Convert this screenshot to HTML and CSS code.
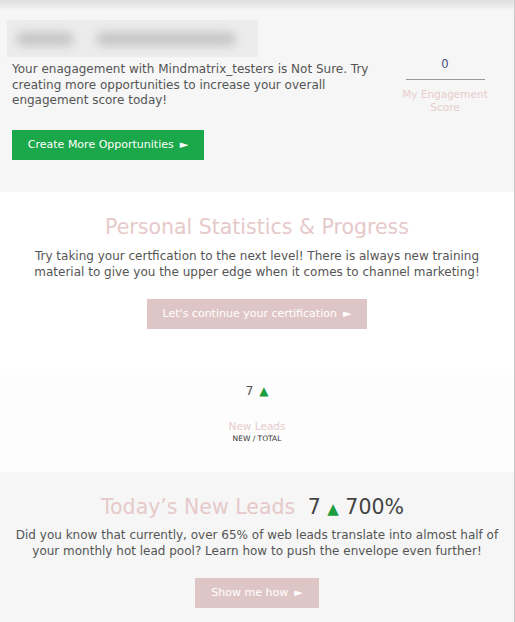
FILE: index.html
```html
<!DOCTYPE html>
<html>
<head>
<meta charset="utf-8">
<link rel="stylesheet" href="styles.css">
</head>
<body>
<div class="page">
  <section class="engage">
    <div class="engage-main">
      <div class="name-blur"><span class="blob b1"></span><span class="blob b2"></span></div>
      <p class="engage-text">Your enagagement with Mindmatrix_testers is Not Sure. Try creating more opportunities to increase your overall engagement score today!</p>
      <a class="btn btn-green">Create More Opportunities <span class="arrow">&#9658;</span></a>
    </div>
    <div class="score">
      <div class="score-num">0</div>
      <div class="score-label">My Engagement Score</div>
    </div>
  </section>
  <section class="stats">
    <h2 class="pink-title">Personal Statistics &amp; Progress</h2>
    <p class="center-text">Try taking your certfication to the next level! There is always new training material to give you the upper edge when it comes to channel marketing!</p>
    <a class="btn btn-pink btn-cert">Let's continue your certification <span class="arrow">&#9658;</span></a>
  </section>
  <section class="leads">
    <div class="leads-num">7 <span class="tri">&#9650;</span></div>
    <div class="leads-label">New Leads</div>
    <div class="leads-sub">NEW / TOTAL</div>
  </section>
  <section class="today">
    <h2 class="today-title"><span class="pink-part">Today’s New Leads</span> <span class="dark-part">7 <span class="tri">&#9650;</span> 700%</span></h2>
    <p class="center-text today-text">Did you know that currently, over 65% of web leads translate into almost half of your monthly hot lead pool? Learn how to push the envelope even further!</p>
    <a class="btn btn-pink btn-show">Show me how <span class="arrow">&#9658;</span></a>
  </section>
</div>
</body>
</html>
```
FILE: styles.css
```css
html, body {
  margin: 0;
  padding: 0;
  background: #ffffff;
}
body {
  font-family: "DejaVu Sans", Verdana, sans-serif;
  color: #555555;
}
.page {
  width: 514px;
  border-right: 1px solid #c9c9c9;
  min-height: 622px;
  background: #f6f6f6;
}
.engage {
  display: flex;
  background: linear-gradient(#dedede, #f6f6f6 11px);
  padding: 20px 0 32px 7px;
}
.engage-main {
  width: 380px;
}
.name-blur {
  width: 251px;
  height: 37px;
  background: #ececec;
  display: flex;
  align-items: center;
  gap: 22px;
  padding-left: 9px;
  box-sizing: border-box;
  overflow: hidden;
}
.blob {
  display: block;
  height: 14px;
  background: #c6c6c6;
  filter: blur(5px);
  border-radius: 7px;
}
.b1 { width: 58px; }
.b2 { width: 140px; }
.engage-text {
  margin: 5px 0 0 5px;
  width: 372px;
  font-size: 12px;
  line-height: 15.5px;
  color: #555555;
}
.btn {
  display: inline-flex;
  align-items: center;
  justify-content: center;
  height: 30px;
  font-size: 11px;
  color: #ffffff;
  box-sizing: border-box;
}
.arrow {
  font-size: 11px;
  margin-left: 6px;
}
.btn-green {
  margin: 21px 0 0 5px;
  width: 192px;
  background: #1aa84b;
}
.score {
  width: 96px;
  margin-left: 10px;
  text-align: center;
  padding-top: 37px;
}
.score-num {
  font-size: 11.5px;
  color: #3f4e7e;
  width: 79px;
  margin: 0 auto;
  padding-bottom: 8px;
  border-bottom: 1px solid #999999;
}
.score-label {
  margin-top: 8px;
  font-size: 10.5px;
  line-height: 13px;
  color: #e8cccc;
}
.stats {
  background: #ffffff;
  text-align: center;
  padding: 22px 0 46px;
}
.pink-title {
  margin: 0;
  font-weight: normal;
  font-size: 20.5px;
  line-height: 26px;
  color: #e6c9c9;
}
.center-text {
  margin: 8px auto 0;
  width: 490px;
  font-size: 12px;
  line-height: 16px;
  color: #555555;
}
.btn-pink {
  background: #dfc6c6;
}
.btn-cert {
  margin-top: 19px;
  width: 220px;
}
.leads {
  background: #fdfdfd;
  text-align: center;
  padding: 8px 0 27px;
}
.leads-num {
  font-size: 12.5px;
  line-height: 16px;
  color: #555555;
}
.tri {
  color: #1b9e3f;
  font-size: 12px;
  margin-left: 2px;
}
.leads-label {
  margin-top: 20px;
  font-size: 10.5px;
  line-height: 14px;
  color: #e6cccc;
}
.leads-sub {
  font-size: 7.5px;
  line-height: 12px;
  color: #333333;
}
.today {
  background: #f6f6f6;
  text-align: center;
  padding: 22px 0 14px;
}
.today-title {
  margin: 0;
  padding-right: 9px;
  font-weight: normal;
  font-size: 20.5px;
  line-height: 26px;
}
.pink-part {
  color: #e6c9c9;
}
.dark-part {
  color: #444444;
  margin-left: 6px;
}
.today-title .tri {
  font-size: 15px;
  margin-left: 0;
}
.today-text {
  margin-top: 5px;
}
.btn-show {
  margin-top: 19px;
  width: 124px;
}
```
